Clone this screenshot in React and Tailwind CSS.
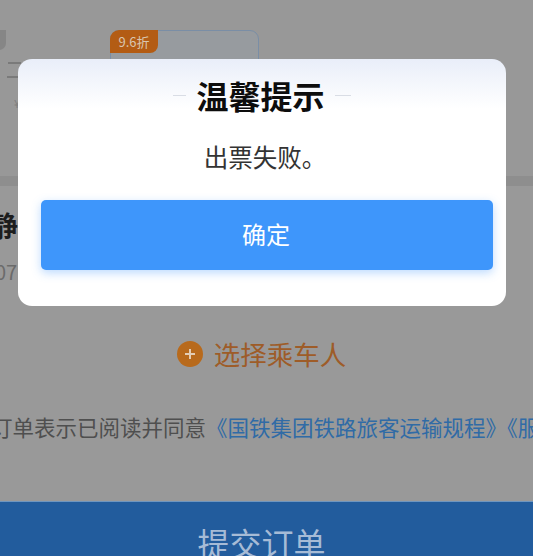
import React from "react";

const cjk = "font-['Noto_Sans_CJK_SC','Liberation_Sans',sans-serif]";

const App = () => {
  return (
    <div className={`relative w-[533px] h-[556px] overflow-hidden bg-[#999999] flex flex-col ${cjk}`}>
      {/* page behind the dialog */}
      <div className="h-[176px] shrink-0 flex bg-[#989898]">
        <div className="w-[110px] shrink-0 flex flex-col">
          <div className="mt-[30px] -ml-[8px] w-[14px] h-[20px] bg-[#868686] rounded-b-[7px]" />
          <div className="mt-[12px] ml-[8px] w-[13px] h-[2px] bg-[#7a7a7a]" />
          <div className="mt-[12px] ml-[7px] w-[11px] h-[2px] bg-[#7a7a7a]" />
          <div className="mt-[18px] ml-[14px] text-[11px] leading-[14px] text-[#7d7d7d]">¥</div>
        </div>
        <div className="relative mt-[30px] w-[149px] h-[146px] rounded-[9px] border border-[#7a8ea6] bg-[#979b9f]">
          <span className="absolute -left-px -top-px w-[48px] h-[23px] bg-[#b35c14] rounded-tl-[9px] rounded-br-[8px] text-[13px] leading-[23px] text-center text-[#d9c6b0]">
            9.6折
          </span>
        </div>
      </div>
      <div className="h-[10px] shrink-0 bg-[#8e8e8e]" />
      <div className="h-[125px] shrink-0 flex flex-col">
        <div className="mt-[23px] -ml-[10px] text-[28px] leading-[32px] font-bold text-[#1d1d1d]">静</div>
        <div className="mt-[19px] -ml-[5px] text-[20px] leading-[24px] text-[#6b6b6b]">07</div>
      </div>
      <div className="h-[60px] shrink-0 flex items-center justify-center gap-[11px] mt-[13px] pr-[10px]">
        <div className="w-[26px] h-[26px] rounded-full bg-[#b86a1c] flex items-center justify-center">
          <svg width="12" height="12" viewBox="0 0 12 12" stroke="#e3cdb4" strokeWidth="2">
            <path d="M6 1v10M1 6h10" />
          </svg>
        </div>
        <span className="text-[26.5px] leading-[32px] text-[#9e5c28]">选择乘车人</span>
      </div>
      <div className="mt-[28px] h-[30px] shrink-0 whitespace-nowrap text-[21.5px] leading-[30px] text-[#4f4f4f] -ml-[9px]">
        订单表示已阅读并同意<span className="text-[#306ba6]">《国铁集团铁路旅客运输规程》《服务</span>
      </div>
      <div className="mt-auto h-[55px] shrink-0 overflow-hidden bg-[#225c9d] border-t border-[#6f96bf] flex items-start justify-center pt-[17px] pr-[10px]">
        <span className="text-[32px] leading-[46px] text-[#a6bbd6]">提交订单</span>
      </div>

      {/* dialog */}
      <div className="absolute left-[18px] top-[59px] w-[488px] h-[247px] rounded-[14px] bg-white bg-gradient-to-b from-[#e9eef9] to-white to-[20%] flex flex-col">
        <div className="mt-[14px] flex items-center justify-center gap-[10px]">
          <span className="w-[13px] h-px bg-[#d9dde5]" />
          <span className="text-[32px] leading-[44px] font-bold text-[#0d0d0d]">温馨提示</span>
          <span className="w-[16px] h-px bg-[#d9dde5]" />
        </div>
        <div className="mt-[22px] pl-[6px] text-[24.5px] leading-[36px] text-[#333333] text-center whitespace-nowrap">出票失败。</div>
        <button className="mt-[25px] ml-[23px] w-[452px] h-[70px] pb-[3px] pr-[2px] rounded-[5px] bg-[#3e96fb] shadow-[0_3px_10px_rgba(62,150,251,0.35)] text-white text-[24px]">
          确定
        </button>
      </div>
    </div>
  );
};

export default App;
